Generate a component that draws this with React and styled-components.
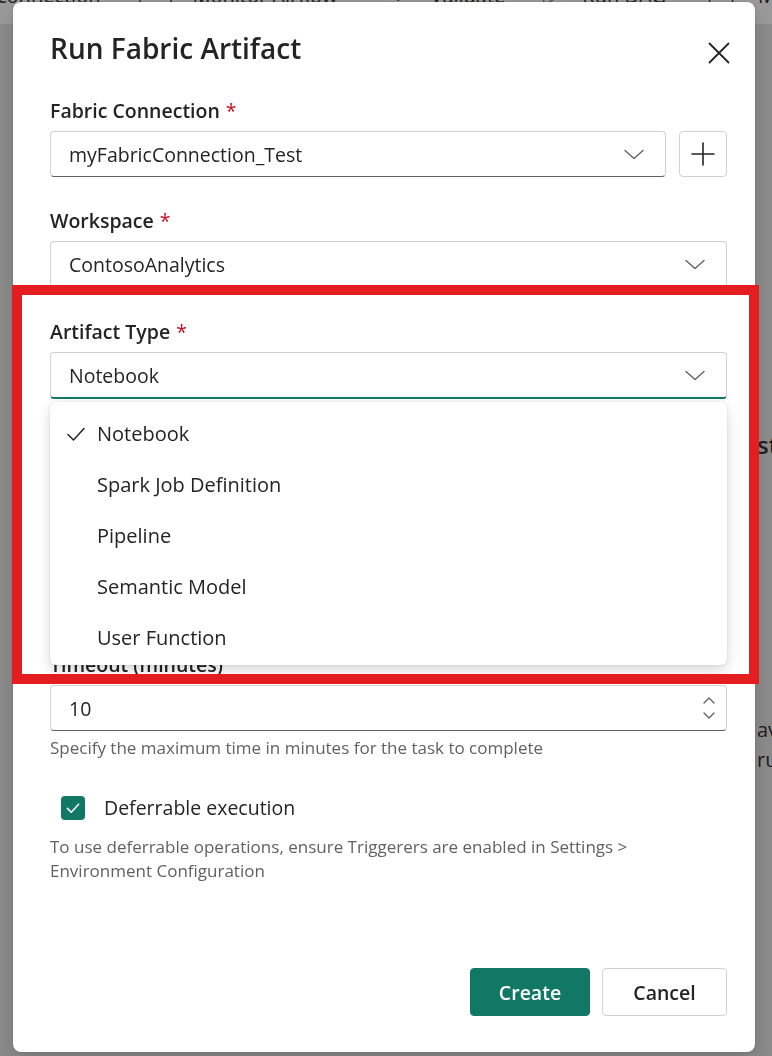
import React from 'react';
import styled, { createGlobalStyle } from 'styled-components';

const GlobalStyle = createGlobalStyle`
  html, body {
    margin: 0;
    padding: 0;
  }
  body {
    font-family: "Open Sans", "Noto Sans", "Liberation Sans", sans-serif;
    color: #242424;
    background: #e6e6e6;
  }
  * {
    box-sizing: border-box;
  }
`;

const artifactTypes = ['Notebook', 'Spark Job Definition', 'Pipeline', 'Semantic Model', 'User Function'];

const ChevronDown = ({ w = 20, h = 11 }) => (
  <svg width={w} height={h} viewBox="0 0 20 11" fill="none">
    <path d="M1 1.5 L10 9.5 L19 1.5" stroke="#616161" strokeWidth="1.4" strokeLinecap="round" strokeLinejoin="round" />
  </svg>
);

const SmallChevron = ({ up }) => (
  <svg width="12" height="7" viewBox="0 0 12 7" fill="none">
    <path d={up ? 'M1 6 L6 1 L11 6' : 'M1 1 L6 6 L11 1'} stroke="#616161" strokeWidth="1.3" strokeLinecap="round" strokeLinejoin="round" />
  </svg>
);

const CheckMark = ({ color = '#242424', size = 20, width = 1.5 }) => (
  <svg width={size} height={size} viewBox="0 0 20 20" fill="none">
    <path d="M2 10.5 L7.5 16 L18 4.5" stroke={color} strokeWidth={width} strokeLinecap="round" strokeLinejoin="round" />
  </svg>
);

const App = () => {
  return (
    <>
      <GlobalStyle />
      <Page>
        <AppBar>
          <AppBarItem $gap={-3}>connection</AppBarItem>
          <AppBarItem $gap={34}>|</AppBarItem>
          <AppBarItem $gap={20}>|</AppBarItem>
          <AppBarItem $gap={16}>Monitor Airflow</AppBarItem>
          <AppBarItem $gap={56} $muted>✓</AppBarItem>
          <AppBarItem $gap={20}>Validate</AppBarItem>
          <AppBarItem $gap={38} $muted>▷</AppBarItem>
          <AppBarItem $gap={24}>Run DAG</AppBarItem>
          <AppBarItem $gap={38}>|</AppBarItem>
          <AppBarItem $gap={12}>|</AppBarItem>
          <AppBarItem $gap={20}>Monitor</AppBarItem>
        </AppBar>
        <PageBody>
          <SideColumn>
            <SideHeading>stats</SideHeading>
            <SideText>available</SideText>
            <SideText>running</SideText>
          </SideColumn>
        </PageBody>
      </Page>

      <Overlay>
        <Dialog>
          <TitleRow>
            <Title>Run Fabric Artifact</Title>
            <CloseButton aria-label="Close">
              <svg width="22" height="22" viewBox="0 0 22 22" fill="none">
                <path d="M1.5 1.5 L20.5 20.5 M20.5 1.5 L1.5 20.5" stroke="#242424" strokeWidth="1.8" strokeLinecap="round" />
              </svg>
            </CloseButton>
          </TitleRow>

          <Form>
            <Field>
              <Label>
                Fabric Connection<Required>*</Required>
              </Label>
              <InputRow>
                <SelectBox>
                  <span>myFabricConnection_Test</span>
                  <ChevronDown />
                </SelectBox>
                <IconButton aria-label="Add connection">
                  <svg width="24" height="24" viewBox="0 0 24 24" fill="none">
                    <path d="M12 1 V23 M1 12 H23" stroke="#242424" strokeWidth="1.6" strokeLinecap="round" />
                  </svg>
                </IconButton>
              </InputRow>
            </Field>

            <Field>
              <Label>
                Workspace<Required>*</Required>
              </Label>
              <SelectBox>
                <span>ContosoAnalytics</span>
                <ChevronDown />
              </SelectBox>
            </Field>

            <Field $extra={1}>
              <Label>
                Artifact Type<Required>*</Required>
              </Label>
              <SelectBox $open>
                <span>Notebook</span>
                <ChevronDown />
              </SelectBox>
              <Listbox>
                {artifactTypes.map((t, i) => (
                  <Option key={t}>
                    <CheckSlot>{i === 0 && <CheckMark />}</CheckSlot>
                    {t}
                  </Option>
                ))}
              </Listbox>
            </Field>

            <Field>
              <Label>
                Artifact<Required>*</Required>
              </Label>
              <SelectBox>
                <Placeholder>Select an artifact</Placeholder>
                <ChevronDown />
              </SelectBox>
            </Field>

            <Field>
              <Label>Parameters</Label>
              <SelectBox>
                <Placeholder>Enter parameters</Placeholder>
              </SelectBox>
            </Field>

            <Field $extra={2}>
              <Label>Timeout (minutes)</Label>
              <SelectBox>
                <span>10</span>
                <Spinner>
                  <SmallChevron up />
                  <SmallChevron />
                </Spinner>
              </SelectBox>
              <Hint>Specify the maximum time in minutes for the task to complete</Hint>
            </Field>
          </Form>

          <CheckRow>
            <CheckBox>
              <CheckMark color="#fff" size={14} width={2.2} />
            </CheckBox>
            <CheckLabel>Deferrable execution</CheckLabel>
          </CheckRow>
          <Note>
            To use deferrable operations, ensure Triggerers are enabled in Settings &gt;
            <br />
            Environment Configuration
          </Note>

          <Actions>
            <Button $primary>Create</Button>
            <Button>Cancel</Button>
          </Actions>
        </Dialog>
        <Highlight />
      </Overlay>
    </>
  );
};

const Page = styled.div`
  height: 100vh;
  overflow: hidden;
  display: flex;
  flex-direction: column;
`;

const AppBar = styled.div`
  height: 24px;
  flex-shrink: 0;
  background: #ffffff;
  display: flex;
  align-items: flex-start;
  overflow: hidden;
  white-space: nowrap;
  font-size: 20px;
  color: #333;
`;

const AppBarItem = styled.span`
  margin-top: -18px;
  margin-left: ${(p) => p.$gap}px;
  line-height: 28px;
  color: ${(p) => (p.$muted ? '#4a8a4a' : '#333')};
`;

const PageBody = styled.div`
  flex: 1;
  display: flex;
  justify-content: flex-end;
`;

const SideColumn = styled.div`
  width: 15px;
  overflow: hidden;
  padding-top: 403px;
  color: #333;
  white-space: nowrap;
`;

const SideHeading = styled.div`
  font-size: 24px;
  font-weight: 600;
  line-height: 36px;
  margin-bottom: 252px;
`;

const SideText = styled.div`
  font-size: 20px;
  line-height: 30px;
`;

const Overlay = styled.div`
  position: fixed;
  inset: 0;
  background: rgba(0, 0, 0, 0.4);
  display: flex;
  padding: 2px 17px 4px 13px;
`;

const Dialog = styled.div`
  flex: 1;
  position: relative;
  background: #ffffff;
  border-radius: 8px;
  box-shadow: 0 0 2px rgba(0, 0, 0, 0.2), 0 8px 16px rgba(0, 0, 0, 0.14);
  padding: 28px 28px 36px 37px;
  display: flex;
  flex-direction: column;
`;

const TitleRow = styled.div`
  display: flex;
  justify-content: space-between;
  align-items: flex-start;
`;

const Title = styled.h2`
  margin: 0;
  font-size: 28px;
  font-weight: 600;
  line-height: 36px;
  color: #242424;
`;

const CloseButton = styled.button`
  width: 24px;
  height: 24px;
  margin-top: 11px;
  margin-right: -4px;
  padding: 0;
  border: none;
  background: transparent;
  display: flex;
  align-items: center;
  justify-content: center;
`;

const Form = styled.div`
  margin-top: 31px;
  display: flex;
  flex-direction: column;
  gap: 30px;
`;

const Field = styled.div`
  position: relative;
  display: flex;
  flex-direction: column;
  margin-top: ${(p) => p.$extra || 0}px;
`;

const Label = styled.label`
  font-size: 19.5px;
  font-weight: 600;
  line-height: 28px;
  margin-bottom: 6px;
  color: #242424;
`;

const Required = styled.span`
  color: #c50f1f;
  font-weight: 400;
  margin-left: 6px;
`;

const InputRow = styled.div`
  display: flex;
  gap: 13px;
`;

const SelectBox = styled.div`
  flex: 1 0 auto;
  height: ${(p) => (p.$open ? '47px' : '46px')};
  display: flex;
  align-items: center;
  justify-content: space-between;
  padding: 0 21px 0 18px;
  border: 1px solid #d1d1d1;
  border-bottom: ${(p) => (p.$open ? '2px solid #117865' : '1px solid #616161')};
  border-radius: 4px;
  font-size: 19.5px;
  color: #242424;
  background: #fff;
`;

const Placeholder = styled.span`
  color: #707070;
`;

const IconButton = styled.button`
  flex-shrink: 0;
  width: 48px;
  height: 46px;
  padding: 0;
  border: 1px solid #d1d1d1;
  border-radius: 4px;
  background: #fff;
  display: flex;
  align-items: center;
  justify-content: center;
`;

const Listbox = styled.div`
  position: absolute;
  top: calc(100% + 3px);
  left: 0;
  right: 0;
  z-index: 2;
  background: #fff;
  border-radius: 6px;
  box-shadow: 0 0 3px rgba(0, 0, 0, 0.12), 0 6px 14px rgba(0, 0, 0, 0.14);
  padding: 6px 0 2px;
`;

const Option = styled.div`
  height: 51px;
  display: flex;
  align-items: center;
  gap: 11px;
  padding-left: 16px;
  font-size: 20px;
  color: #242424;
`;

const CheckSlot = styled.span`
  width: 20px;
  height: 20px;
  display: flex;
  align-items: center;
  justify-content: center;
`;

const Spinner = styled.div`
  display: flex;
  flex-direction: column;
  gap: 8px;
  margin-right: -10px;
`;

const Hint = styled.div`
  margin-top: 6px;
  font-size: 17px;
  line-height: 22px;
  color: #616161;
`;

const CheckRow = styled.div`
  margin-top: 35px;
  padding-left: 11px;
  display: flex;
  align-items: center;
  gap: 19px;
`;

const CheckBox = styled.span`
  width: 24px;
  height: 24px;
  border-radius: 4px;
  background: #117865;
  display: flex;
  align-items: center;
  justify-content: center;
`;

const CheckLabel = styled.span`
  font-size: 19.5px;
  line-height: 28px;
  color: #242424;
`;

const Note = styled.p`
  margin: 13px 0 0;
  font-size: 17px;
  line-height: 24px;
  color: #616161;
`;

const Actions = styled.div`
  margin-top: auto;
  display: flex;
  justify-content: flex-end;
  gap: 12px;
`;

const Button = styled.button`
  height: 48px;
  min-width: ${(p) => (p.$primary ? '120px' : '125px')};
  padding: 0 20px;
  border-radius: 4px;
  border: 1px solid ${(p) => (p.$primary ? '#117865' : '#d1d1d1')};
  background: ${(p) => (p.$primary ? '#117865' : '#fff')};
  color: ${(p) => (p.$primary ? '#fff' : '#242424')};
  font-family: inherit;
  font-size: 19.5px;
  font-weight: 600;
`;

const Highlight = styled.div`
  position: absolute;
  left: 12px;
  top: 285px;
  width: 747px;
  height: 399px;
  border: 10px solid #e41e20;
  pointer-events: none;
  z-index: 3;
`;

export default App;
